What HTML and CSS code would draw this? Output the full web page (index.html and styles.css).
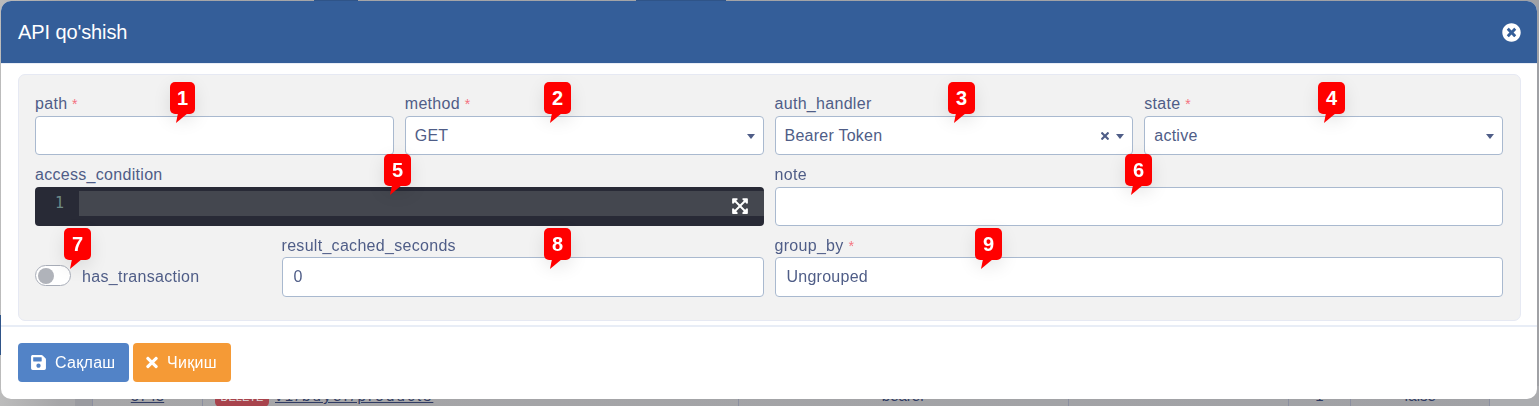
FILE: index.html
```html
<!DOCTYPE html>
<html lang="uz">
<head>
<meta charset="utf-8">
<title>API qo'shish</title>
<link rel="stylesheet" href="styles.css">
</head>
<body>
<div class="backdrop">
  <div class="top-blue top-blue-a"></div>
  <div class="top-blue top-blue-b"></div>
  <div class="side-blue"></div>
  <div class="bg-row">
    <span class="cell c-a"></span>
    <span class="cell c-id"><u>5743</u></span>
    <span class="cell c-path"><b class="method-tag">DELETE</b><u>v1/buyer/products</u></span>
    <span class="cell c-auth">bearer</span>
    <span class="cell c-note"></span>
    <span class="cell c-num">1</span>
    <span class="cell c-flag">false</span>
    <span class="cell c-end"></span>
  </div>
</div>

<div class="modal">
  <header class="modal-head">
    <h1 class="modal-title">API qo'shish</h1>
    <svg class="close-icon" viewBox="0 0 512 512"><path d="M256 8C119 8 8 119 8 256s111 248 248 248 248-111 248-248S393 8 256 8zm121.6 313.1c4.7 4.7 4.7 12.3 0 17L338 377.6c-4.7 4.7-12.3 4.7-17 0L256 312l-65.1 65.6c-4.7 4.7-12.3 4.7-17 0L134.4 338c-4.7-4.7-4.7-12.3 0-17l65.6-65-65.6-65.1c-4.7-4.7-4.7-12.3 0-17l39.6-39.6c4.7-4.7 12.3-4.7 17 0l65 65.7 65.1-65.6c4.7-4.7 12.3-4.7 17 0l39.6 39.6c4.7 4.7 4.7 12.3 0 17L312 256l65.6 65.1z"/></svg>
  </header>

  <div class="modal-body">
    <form class="panel">
      <div class="field span-3">
        <label class="label">path <i class="req">*</i></label>
        <div class="control"></div>
      </div>
      <div class="field span-3">
        <label class="label">method <i class="req">*</i></label>
        <div class="control"><span class="value">GET</span><span class="caret"></span></div>
      </div>
      <div class="field span-3">
        <label class="label">auth_handler</label>
        <div class="control">
          <span class="value">Bearer Token</span>
          <svg class="clear-icon" viewBox="0 0 352 512"><path d="M242.72 256l100.07-100.07c12.28-12.28 12.28-32.19 0-44.48l-22.24-22.24c-12.28-12.28-32.19-12.28-44.48 0L176 189.28 75.93 89.21c-12.28-12.28-32.19-12.28-44.48 0L9.21 111.45c-12.28 12.28-12.28 32.19 0 44.48L109.28 256 9.21 356.07c-12.28 12.28-12.28 32.19 0 44.48l22.24 22.24c12.28 12.28 32.2 12.28 44.48 0L176 322.72l100.07 100.07c12.28 12.28 32.2 12.28 44.48 0l22.24-22.24c12.28-12.28 12.28-32.19 0-44.48L242.72 256z"/></svg>
          <span class="caret"></span>
        </div>
      </div>
      <div class="field span-3">
        <label class="label">state <i class="req">*</i></label>
        <div class="control"><span class="value">active</span><span class="caret"></span></div>
      </div>

      <div class="field span-6">
        <label class="label">access_condition</label>
        <div class="editor">
          <div class="gutter">1</div>
          <div class="code-area">
            <div class="active-line">
              <svg class="expand-icon" viewBox="0 0 448 512"><path d="M448 344v112a23.94 23.94 0 0 1-24 24H312c-21.39 0-32.09-25.9-17-41l36.2-36.2L224 295.6 116.77 402.9 153 439c15.09 15.1 4.39 41-17 41H24a23.94 23.94 0 0 1-24-24V344c0-21.4 25.89-32.1 41-17l36.19 36.2L184.46 256 77.18 148.7 41 185c-15.1 15.1-41 4.4-41-17V56a23.94 23.94 0 0 1 24-24h112c21.39 0 32.09 25.9 17 41l-36.2 36.2L224 216.4l107.23-107.3L295 73c-15.09-15.1-4.39-41 17-41h112a23.94 23.94 0 0 1 24 24v112c0 21.4-25.89 32.1-41 17l-36.19-36.2L263.54 256l107.28 107.3L407 327.1c15.1-15.2 41-4.5 41 16.9z"/></svg>
            </div>
          </div>
        </div>
      </div>
      <div class="field span-6">
        <label class="label">note</label>
        <div class="control"></div>
      </div>

      <div class="switch-field span-2">
        <span class="switch"><span class="knob"></span></span>
        <span class="switch-label">has_transaction</span>
      </div>
      <div class="field span-4">
        <label class="label label-short">result_cached_seconds</label>
        <div class="control control-tall"><span class="value">0</span></div>
      </div>
      <div class="field span-6">
        <label class="label label-short">group_by <i class="req">*</i></label>
        <div class="control control-tall"><span class="value">Ungrouped</span></div>
      </div>
    </form>
  </div>

  <footer class="modal-foot">
    <button class="btn btn-save" type="button">
      <svg class="btn-icon" viewBox="0 0 448 512"><path d="M433.941 129.941l-83.882-83.882A48 48 0 0 0 316.118 32H48C21.49 32 0 53.49 0 80v352c0 26.51 21.49 48 48 48h352c26.51 0 48-21.49 48-48V163.882a48 48 0 0 0-14.059-33.941zM224 416c-35.346 0-64-28.654-64-64 0-35.346 28.654-64 64-64s64 28.654 64 64c0 35.346-28.654 64-64 64zm96-304.52V212c0 6.627-5.373 12-12 12H76c-6.627 0-12-5.373-12-12V108c0-6.627 5.373-12 12-12h228.52c3.183 0 6.235 1.264 8.485 3.515l3.48 3.48A11.996 11.996 0 0 1 320 111.48z"/></svg>
      Сақлаш
    </button>
    <button class="btn btn-exit" type="button">
      <svg class="btn-icon" viewBox="0 0 352 512"><path d="M242.72 256l100.07-100.07c12.28-12.28 12.28-32.19 0-44.48l-22.24-22.24c-12.28-12.28-32.19-12.28-44.48 0L176 189.28 75.93 89.21c-12.28-12.28-32.19-12.28-44.48 0L9.21 111.45c-12.28 12.28-12.28 32.19 0 44.48L109.28 256 9.21 356.07c-12.28 12.28-12.28 32.19 0 44.48l22.24 22.24c12.28 12.28 32.2 12.28 44.48 0L176 322.72l100.07 100.07c12.28 12.28 32.2 12.28 44.48 0l22.24-22.24c12.28-12.28 12.28-32.19 0-44.48L242.72 256z"/></svg>
      Чиқиш
    </button>
  </footer>

  <span class="pin pin-1">1</span>
  <span class="pin pin-2">2</span>
  <span class="pin pin-3">3</span>
  <span class="pin pin-4">4</span>
  <span class="pin pin-5">5</span>
  <span class="pin pin-6">6</span>
  <span class="pin pin-7">7</span>
  <span class="pin pin-8">8</span>
  <span class="pin pin-9">9</span>
</div>
</body>
</html>
```

FILE: styles.css
```css
* { box-sizing: border-box; }

html, body {
  margin: 0;
  height: 100%;
  overflow: hidden;
}

body {
  font-family: "Liberation Sans", Arial, sans-serif;
  color: #4f5d87;
  font-size: 16px;
}

/* dimmed page behind the dialog */
.backdrop {
  position: fixed;
  inset: 0;
  background:
    linear-gradient(90deg, #bcbcbc 0, #a6a6a8 60px, #a0a1a5 100%);
  overflow: hidden;
}

.top-blue {
  position: absolute;
  top: 0;
  height: 2px;
  background: #2f5488;
}
.top-blue-a { left: 314px; width: 44px; }
.top-blue-b { left: 636px; width: 90px; }

.side-blue {
  position: absolute;
  left: 0;
  top: 315px;
  width: 2px;
  height: 40px;
  background: #2f5488;
}

.bg-row {
  position: absolute;
  left: 75px;
  top: 386px;
  display: grid;
  grid-template-columns: 18px 110px 536px 330px 220px 62px 139px 49px;
  height: 20px;
  font-size: 15px;
  line-height: 20px;
  color: #2f3b63;
}

.cell {
  border-right: 1px solid #8b8fa0;
  text-align: center;
  white-space: nowrap;
}
.c-a { background: #9a9ba0; }
.c-end { border-right: 0; background: #abacaf; }
.c-path { text-align: left; padding-left: 12px; letter-spacing: 2.3px; }

.method-tag {
  display: inline-block;
  width: 54px;
  margin-right: 6px;
  border-radius: 5px;
  background: #a8434c;
  color: #ddd;
  font-size: 11px;
  font-weight: 400;
  text-align: center;
  letter-spacing: 0;
}

/* dialog */
.modal {
  position: absolute;
  left: 1px;
  top: 1px;
  width: 1536px;
  height: 398px;
  display: flex;
  flex-direction: column;
  background: #fff;
  border-radius: 10px;
}

.modal-head {
  display: flex;
  align-items: center;
  justify-content: space-between;
  flex: 0 0 62px;
  padding: 0 16px 0 17px;
  background: #345e99;
  border-radius: 10px 10px 0 0;
}

.modal-title {
  margin: 0;
  color: #fff;
  font-size: 20px;
  font-weight: 400;
  line-height: 24px;
  letter-spacing: -0.1px;
}

.close-icon {
  width: 19px;
  height: 19px;
  fill: #fff;
}

.modal-body {
  flex: 0 0 auto;
  padding: 10px 16px 4px 17px;
  border-top: 1px solid #e8edf6;
  border-bottom: 2px solid #e8edf6;
}

.panel {
  display: grid;
  grid-template-columns: repeat(12, 1fr);
  column-gap: 11px;
  row-gap: 12px;
  padding: 21px 17px 23px 16px;
  background: #f2f2f2;
  border: 1px solid #e6e9f3;
  border-radius: 7px;
}

.span-2 { grid-column: span 2; }
.span-3 { grid-column: span 3; }
.span-4 { grid-column: span 4; }
.span-6 { grid-column: span 6; }

.field {
  display: flex;
  flex-direction: column;
  min-width: 0;
}

.label {
  display: block;
  height: 20px;
  font-size: 16px;
  line-height: 16px;
  letter-spacing: 0.3px;
}
.label-short { height: 19px; }

.req {
  color: #f4717f;
  font-size: 14px;
  font-style: normal;
}

.control {
  display: flex;
  align-items: center;
  height: 39px;
  padding: 0 8px 0 9px;
  background: #fff;
  border: 1px solid #a9b9cf;
  border-radius: 4px;
}
.control-tall {
  height: 40px;
  padding-left: 11px;
}

.value {
  flex: 1;
  font-size: 16px;
  letter-spacing: 0.25px;
}

.caret {
  width: 0;
  height: 0;
  border-left: 4px solid transparent;
  border-right: 4px solid transparent;
  border-top: 5px solid #4f5d87;
  margin-top: 2px;
}

.clear-icon {
  width: 8px;
  height: 12px;
  margin-right: 7px;
  fill: #4f5d87;
}

/* code editor */
.editor {
  display: flex;
  height: 39px;
  background: #282a36;
  border-radius: 4px;
  overflow: hidden;
}

.gutter {
  flex: 0 0 44px;
  padding: 6px 15px 0 0;
  text-align: right;
  color: #6d8a88;
  font-family: "DejaVu Sans Mono", "Liberation Mono", monospace;
  font-size: 15px;
  line-height: 20px;
}

.code-area {
  flex: 1;
  padding-top: 4px;
}

.active-line {
  display: flex;
  align-items: center;
  justify-content: flex-end;
  height: 25px;
  padding: 5px 16px 0 0;
  background: #44474f;
}

.expand-icon {
  width: 16px;
  height: 18px;
  fill: #fff;
}

/* switch */
.switch-field {
  display: flex;
  align-items: center;
  align-self: end;
  gap: 11px;
  height: 40px;
}

.switch {
  display: flex;
  align-items: center;
  width: 36px;
  height: 21px;
  margin-bottom: 3px;
  padding-left: 2px;
  background: #fff;
  border: 1px solid #a8adb8;
  border-radius: 11px;
}

.knob {
  width: 16px;
  height: 16px;
  background: #b0b3ba;
  border-radius: 50%;
}

.switch-label {
  font-size: 16px;
  letter-spacing: 0.3px;
}

/* footer */
.modal-foot {
  display: flex;
  gap: 4px;
  padding: 16px 17px;
}

.btn {
  display: flex;
  align-items: center;
  gap: 9px;
  height: 39px;
  padding: 0 0 0 13px;
  border: 0;
  border-radius: 4px;
  color: #fff;
  font-family: inherit;
  font-size: 16px;
  letter-spacing: 0.3px;
}

.btn-save { width: 111px; background: #5283c7; }
.btn-exit { width: 98px; background: #f59a36; }

.btn-icon {
  width: 15px;
  height: 17px;
  fill: #fff;
}
.btn-exit .btn-icon { width: 12px; }

/* numbered callouts */
.pin {
  position: absolute;
  width: 27px;
  height: 32px;
  background: #ff0000;
  border-radius: 5px;
  color: #fff;
  font-size: 20px;
  font-weight: 700;
  line-height: 32px;
  text-align: center;
  box-shadow: 0 6px 18px rgba(0, 0, 0, 0.1);
}

.pin::after {
  content: "";
  position: absolute;
  left: 6px;
  top: 31px;
  width: 12px;
  height: 10px;
  background: #ff0000;
  clip-path: polygon(2px 0, 12px 0, 0 100%);
}

.pin-1 { left: 169px; top: 81px; width: 25px; }
.pin-2 { left: 543px; top: 81px; }
.pin-3 { left: 947px; top: 81px; }
.pin-4 { left: 1317px; top: 81px; }
.pin-5 { left: 383px; top: 153px; }
.pin-6 { left: 1124px; top: 153px; }
.pin-7 { left: 63px; top: 227px; }
.pin-8 { left: 543px; top: 227px; }
.pin-9 { left: 974px; top: 227px; }
```
